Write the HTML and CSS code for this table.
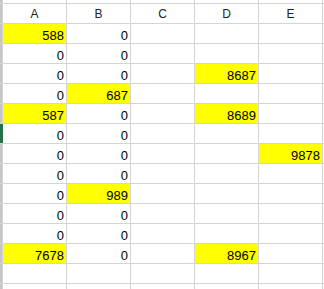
FILE: index.html
```html
<!DOCTYPE html>
<html>
<head>
<meta charset="utf-8">
<link rel="stylesheet" href="styles.css">
</head>
<body>
<div class="sheet">
  <div class="row top"><div class="rh"></div><div class="c"></div><div class="c"></div><div class="c"></div><div class="c"></div><div class="c"></div><div class="c"></div></div>
  <div class="row head"><div class="rh"></div><div class="h">A</div><div class="h">B</div><div class="h">C</div><div class="h">D</div><div class="h">E</div><div class="h"></div></div>
  <div class="row"><div class="rh"></div><div class="c y">588</div><div class="c">0</div><div class="c"></div><div class="c"></div><div class="c"></div><div class="c"></div></div>
  <div class="row"><div class="rh"></div><div class="c">0</div><div class="c">0</div><div class="c"></div><div class="c"></div><div class="c"></div><div class="c"></div></div>
  <div class="row"><div class="rh"></div><div class="c">0</div><div class="c">0</div><div class="c"></div><div class="c y">8687</div><div class="c"></div><div class="c"></div></div>
  <div class="row"><div class="rh"></div><div class="c">0</div><div class="c y">687</div><div class="c"></div><div class="c"></div><div class="c"></div><div class="c"></div></div>
  <div class="row"><div class="rh"></div><div class="c y">587</div><div class="c">0</div><div class="c"></div><div class="c y">8689</div><div class="c"></div><div class="c"></div></div>
  <div class="row"><div class="rh sel"></div><div class="c">0</div><div class="c">0</div><div class="c"></div><div class="c"></div><div class="c"></div><div class="c"></div></div>
  <div class="row"><div class="rh"></div><div class="c">0</div><div class="c">0</div><div class="c"></div><div class="c"></div><div class="c y">9878</div><div class="c"></div></div>
  <div class="row"><div class="rh"></div><div class="c">0</div><div class="c">0</div><div class="c"></div><div class="c"></div><div class="c"></div><div class="c"></div></div>
  <div class="row"><div class="rh"></div><div class="c">0</div><div class="c y">989</div><div class="c"></div><div class="c"></div><div class="c"></div><div class="c"></div></div>
  <div class="row"><div class="rh"></div><div class="c">0</div><div class="c">0</div><div class="c"></div><div class="c"></div><div class="c"></div><div class="c"></div></div>
  <div class="row"><div class="rh"></div><div class="c">0</div><div class="c">0</div><div class="c"></div><div class="c"></div><div class="c"></div><div class="c"></div></div>
  <div class="row"><div class="rh"></div><div class="c y">7678</div><div class="c">0</div><div class="c"></div><div class="c y">8967</div><div class="c"></div><div class="c"></div></div>
  <div class="row"><div class="rh"></div><div class="c"></div><div class="c"></div><div class="c"></div><div class="c"></div><div class="c"></div><div class="c"></div></div>
  <div class="row"><div class="rh"></div><div class="c"></div><div class="c"></div><div class="c"></div><div class="c"></div><div class="c"></div><div class="c"></div></div>
</div>
</body>
</html>
```
FILE: styles.css
```css
html, body {
  margin: 0;
  padding: 0;
  background: #ffffff;
  overflow: hidden;
}
.sheet {
  display: grid;
  grid-template-columns: 2px repeat(5, 63px) 1fr;
  grid-template-rows: 3px 19px repeat(14, 19px);
  gap: 1px;
  background: #d4d4d4;
  width: 324px;
  height: 289px;
  overflow: hidden;
  font-family: "Liberation Sans", Arial, sans-serif;
  font-size: 13px;
  color: #000000;
}
.row {
  display: contents;
}
.rh {
  background: #c6c6c6;
}
.rh.sel {
  background: #217346;
  box-shadow: 1px 0 0 #217346;
}
.c {
  background: #ffffff;
  display: flex;
  align-items: flex-end;
  justify-content: flex-end;
  padding-right: 2px;
  line-height: 15px;
  min-width: 0;
  overflow: hidden;
}
.c.y {
  background: #ffff00;
}
.h {
  background: #ffffff;
  display: flex;
  align-items: flex-end;
  justify-content: center;
  font-size: 12px;
  line-height: 14px;
  padding-bottom: 2px;
  color: #222222;
  min-width: 0;
  overflow: hidden;
}
```
